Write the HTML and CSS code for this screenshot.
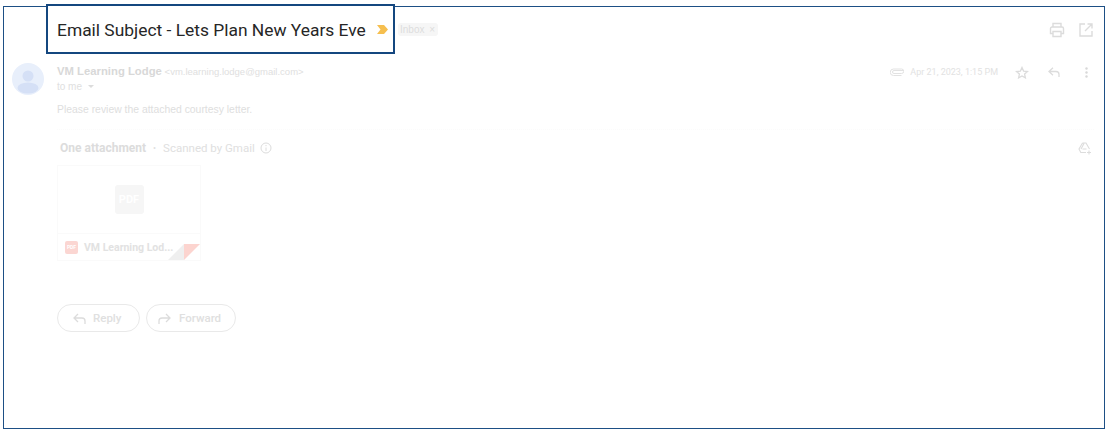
FILE: index.html
```html
<!DOCTYPE html>
<html lang="en">
<head>
    <meta charset="UTF-8">
    <title>Email Subject</title>
    <link rel="stylesheet" href="styles.css">
</head>
<body>
    <div class="frame">
        <!-- Subject row -->
        <div class="subject-row">
            <div class="subject-box">
                <h1>Email Subject - Lets Plan New Years Eve</h1>
                <svg class="marker" width="11" height="9" viewBox="0 0 11 9"><path d="M0 0h7l4 4.500L7 9H0l3.500-4.500z" fill="#f6bf4f"/></svg>
            </div>
            <span class="label">Inbox <span class="label-x">×</span></span>
            <div class="subject-tools">
                <svg width="16" height="16" viewBox="0 0 16 16" fill="none" stroke="#dcdcdc" stroke-width="1.400"><path d="M4 5V1.500h8V5M4 11.500H1.500V6.500a1.500 1.500 0 0 1 1.500-1.500h10a1.500 1.500 0 0 1 1.500 1.500v5H12"/><path d="M4 9.500h8v5H4z"/></svg>
                <svg width="14" height="14" viewBox="0 0 14 14" fill="none" stroke="#dcdcdc" stroke-width="1.400"><path d="M6 1H1v12h12V8M8.500 1H13v4.500M13 1L6 8"/></svg>
            </div>
        </div>

        <!-- Message header -->
        <div class="message">
            <svg class="avatar" width="32" height="32" viewBox="0 0 32 32"><circle cx="16" cy="16" r="16" fill="#e8effb"/><circle cx="16" cy="13" r="5.500" fill="#d5e0f6"/><ellipse cx="16" cy="25" rx="10.500" ry="5.500" fill="#d5e0f6"/></svg>
            <div class="message-main">
                <div class="message-top">
                    <div class="sender">
                        <div><b class="sender-name">VM Learning Lodge</b> <span class="sender-mail">&lt;vm.learning.lodge@gmail.com&gt;</span></div>
                        <div class="to-me">to me <span class="caret"></span></div>
                    </div>
                    <div class="message-tools">
                        <svg class="clip" width="14" height="8" viewBox="0 0 14 8" fill="none" stroke="#e2e2e2" stroke-width="1"><path d="M13.500 2.500H4a1.500 1.500 0 0 0 0 3h7.500a2 2 0 0 0 0-4.500H3.500a3 3 0 0 0 0 6.500h8"/></svg>
                        <span class="date">Apr 21, 2023, 1:15 PM</span>
                        <svg class="star" width="14" height="13" viewBox="0 0 14 13" fill="none" stroke="#dcdcdc" stroke-width="1.300"><path d="M7 1.500l1.600 3.600 3.900.4-2.900 2.600.8 3.800L7 10l-3.400 1.900.8-3.800L1.500 5.500l3.900-.4z"/></svg>
                        <svg class="reply-icon" width="12" height="10" viewBox="0 0 12 10" fill="none" stroke="#dcdcdc" stroke-width="1.300"><path d="M5 .8L1 4.500l4 3.700M1 4.500h7a3 3 0 0 1 3 3V10"/></svg>
                        <svg class="dots" width="3" height="11" viewBox="0 0 3 11" fill="#d8d8d8"><circle cx="1.500" cy="1.500" r="1.200"/><circle cx="1.500" cy="5.500" r="1.200"/><circle cx="1.500" cy="9.500" r="1.200"/></svg>
                    </div>
                </div>
            </div>
        </div>

        <p class="body-text">Please review the attached courtesy letter.</p>

        <div class="divider"></div>

        <!-- Attachment -->
        <div class="attach-head">
            <b class="attach-title">One attachment</b>
            <span class="attach-dot">•</span>
            <span class="attach-scan">Scanned by Gmail</span>
            <svg width="12" height="12" viewBox="0 0 12 12" fill="none" stroke="#dcdcdc"><circle cx="6" cy="6" r="5"/><path d="M6 5.500V9M6 3v1.200"/></svg>
            <svg class="drive" width="14" height="13" viewBox="0 0 14 13" fill="none" stroke="#dcdcdc" stroke-width="1.100"><path d="M4.500 1h3.500l3.500 6M4.500 1L1 7l1.800 3.500H8M4.500 7h4M6 1.500L3 7"/><path d="M11 8.500v4M9 10.500h4"/></svg>
        </div>

        <div class="card">
            <div class="card-preview"><span class="pdf-big">PDF</span></div>
            <div class="card-foot">
                <span class="pdf-small">PDF</span>
                <span class="card-name">VM Learning Lod...</span>
                <span class="fold"></span>
            </div>
        </div>

        <!-- Reply and forward -->
        <div class="actions">
            <div class="action-btn reply-btn">
                <svg width="13" height="11" viewBox="0 0 13 11" fill="none" stroke="#dcdcdc" stroke-width="1.300"><path d="M5 1L1 5l4 4M1 5h8a3 3 0 0 1 3 3v3"/></svg>
                Reply
            </div>
            <div class="action-btn forward-btn">
                <svg width="13" height="11" viewBox="0 0 13 11" fill="none" stroke="#dcdcdc" stroke-width="1.300"><path d="M8 1l4 4-4 4M12 5H4a3 3 0 0 0-3 3v3"/></svg>
                Forward
            </div>
        </div>
    </div>
</body>
</html>
```

FILE: styles.css
```css
/* General reset */
* {
    margin: 0;
    padding: 0;
    box-sizing: border-box;
}

body {
    background-color: #ffffff;
    font-family: Roboto, 'Liberation Sans', sans-serif;
    padding: 6px 3px 0 3px;
}

.frame {
    width: 1102px;
    height: 423px;
    border: 1px solid #1d4f85;
    padding-right: 10px;
}

/* Subject row */
.subject-row {
    display: flex;
    align-items: center;
    margin-top: -3px;
}
.subject-box {
    display: flex;
    align-items: center;
    flex-shrink: 0;
    width: 349px;
    height: 50px;
    margin-left: 42px;
    padding-left: 9px;
    border: 2px solid #14477f;
    background-color: #ffffff;
}
.subject-box h1 {
    padding-top: 1px;
    font-size: 17.400px;
    font-weight: 400;
    color: #262626;
    white-space: nowrap;
}
.marker {
    flex-shrink: 0;
    margin-left: 11px;
}
.label {
    margin-left: 3px;
    padding: 1px 3px 1px 2px;
    background-color: #f6f6f6;
    border-radius: 3px;
    font-family: 'Liberation Sans', sans-serif;
    font-size: 10px;
    color: #dddddd;
}
.label-x {
    margin-left: 2px;
}
.subject-tools {
    display: flex;
    align-items: center;
    gap: 14px;
    margin-left: auto;
    padding: 2px 1px 0 0;
}

/* Message header */
.message {
    display: flex;
    margin-top: 9px;
    padding-left: 8px;
}
.avatar {
    flex-shrink: 0;
}
.message-main {
    flex: 1;
    margin-left: 13px;
}
.message-top {
    display: flex;
    justify-content: space-between;
    padding-top: 2px;
}
.sender {
    font-family: 'Liberation Sans', sans-serif;
    font-size: 10px;
    color: #e0e0e0;
}
.sender-name {
    font-size: 11.300px;
    font-weight: 700;
    color: #d8d8d8;
}
.sender-mail {
    font-size: 9.500px;
}
.to-me {
    margin-top: 4px;
    display: flex;
    align-items: center;
    gap: 6px;
}
.caret {
    border-top: 3px solid #dcdcdc;
    border-left: 3px solid transparent;
    border-right: 3px solid transparent;
}
.message-tools {
    display: flex;
    align-items: center;
    height: 14px;
}
.date {
    margin-left: 6px;
    font-size: 9px;
    color: #e2e2e2;
}
.star {
    margin-left: 17px;
}
.reply-icon {
    margin-left: 19px;
}
.dots {
    margin-left: 25px;
    margin-right: 6px;
}

.body-text {
    margin: 9px 0 0 53px;
    font-family: 'Liberation Sans', sans-serif;
    font-size: 10.400px;
    color: #dedede;
}

.divider {
    margin: 14px 0 0 53px;
    border-top: 1px dotted #fbfbfb;
}

/* Attachment */
.attach-head {
    display: flex;
    align-items: center;
    margin: 11px 0 0 56px;
    font-size: 11.500px;
    color: #e0e0e0;
}
.attach-title {
    font-size: 12px;
    font-weight: 700;
    color: #dcdcdc;
}
.attach-dot {
    margin: 0 7px;
    font-size: 9px;
}
.attach-scan {
    margin-right: 5px;
}
.drive {
    margin-left: auto;
    margin-right: 2px;
}

.card {
    width: 144px;
    height: 96px;
    margin: 10px 0 0 53px;
    border: 1px solid #fafafa;
    display: flex;
    flex-direction: column;
}
.card-preview {
    flex: 1;
    display: flex;
    align-items: center;
    justify-content: center;
}
.pdf-big {
    width: 29px;
    height: 29px;
    background-color: #f6f6f6;
    border-radius: 3px;
    color: #ffffff;
    font-size: 11px;
    font-weight: 700;
    line-height: 29px;
    text-align: center;
}
.card-foot {
    position: relative;
    height: 27px;
    border-top: 1px solid #fafafa;
    display: flex;
    align-items: center;
    overflow: hidden;
    padding-left: 7px;
}
.pdf-small {
    width: 13px;
    height: 13px;
    background-color: #fbd6d2;
    border-radius: 2px;
    color: #ffffff;
    font-size: 5px;
    font-weight: 700;
    line-height: 13px;
    text-align: center;
}
.card-name {
    margin-left: 6px;
    font-size: 10.500px;
    font-weight: 700;
    color: #e2e2e2;
}
/* folded corner in the card foot */
.fold {
    position: absolute;
    right: 0;
    bottom: 0;
    width: 32px;
    height: 16px;
}
.fold::before {
    content: "";
    position: absolute;
    left: 0;
    top: 0;
    border-bottom: 16px solid #efefef;
    border-left: 16px solid transparent;
}
.fold::after {
    content: "";
    position: absolute;
    right: 0;
    top: 0;
    border-top: 16px solid #fcd4cf;
    border-right: 16px solid transparent;
}

/* Reply and forward */
.actions {
    display: flex;
    gap: 6px;
    margin: 43px 0 0 53px;
}
.action-btn {
    display: flex;
    align-items: center;
    height: 28px;
    border: 1px solid #e9e9e9;
    border-radius: 14px;
    font-size: 11.500px;
    font-weight: 500;
    color: #e0e0e0;
}
.reply-btn {
    width: 83px;
    padding-left: 15px;
    gap: 7px;
}
.forward-btn {
    width: 90px;
    padding-left: 11px;
    gap: 8px;
}
```
